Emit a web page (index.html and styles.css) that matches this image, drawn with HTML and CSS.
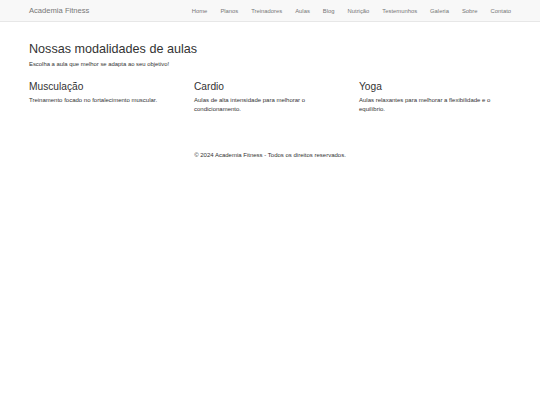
FILE: index.html
```html
<!DOCTYPE html>
<html lang="pt">
<head>
<meta charset="utf-8">
<title>Academia Fitness</title>
<link rel="stylesheet" href="styles.css">
</head>
<body>
<nav class="navbar">
  <div class="container nav-inner">
    <a class="brand" href="#">Academia Fitness</a>
    <ul class="nav-links">
      <li><a href="#">Home</a></li>
      <li><a href="#">Planos</a></li>
      <li><a href="#">Treinadores</a></li>
      <li><a href="#">Aulas</a></li>
      <li><a href="#">Blog</a></li>
      <li><a href="#">Nutrição</a></li>
      <li><a href="#">Testemunhos</a></li>
      <li><a href="#">Galeria</a></li>
      <li><a href="#">Sobre</a></li>
      <li><a href="#">Contato</a></li>
    </ul>
  </div>
</nav>
<main class="container main">
  <h1 class="title">Nossas modalidades de aulas</h1>
  <p class="lead">Escolha a aula que melhor se adapta ao seu objetivo!</p>
  <div class="cols">
    <div class="col">
      <h2 class="col-title">Musculação</h2>
      <p class="col-text">Treinamento focado no fortalecimento muscular.</p>
    </div>
    <div class="col">
      <h2 class="col-title">Cardio</h2>
      <p class="col-text">Aulas de alta intensidade para melhorar o condicionamento.</p>
    </div>
    <div class="col">
      <h2 class="col-title">Yoga</h2>
      <p class="col-text">Aulas relaxantes para melhorar a flexibilidade e o equilíbrio.</p>
    </div>
  </div>
</main>
<footer class="footer">© 2024 Academia Fitness - Todos os direitos reservados.</footer>
</body>
</html>
```
FILE: styles.css
```css
* { box-sizing: border-box; }
body {
  margin: 0;
  font-family: "Liberation Sans", Arial, sans-serif;
  color: #333;
  background: #fff;
}
.container {
  width: 482px;
  margin: 0 auto;
}
.navbar {
  background: #f8f8f8;
  border-bottom: 1px solid #e7e7e7;
  height: 22px;
}
.nav-inner {
  display: flex;
  align-items: center;
  justify-content: space-between;
  height: 21px;
}
.brand {
  color: #777;
  font-size: 7.6px;
  line-height: 10px;
  text-decoration: none;
}
.nav-links {
  list-style: none;
  margin: 0;
  padding: 0;
  display: flex;
  gap: 13px;
  font-size: 5.85px;
  line-height: 8px;
}
.nav-links a {
  color: #777;
  text-decoration: none;
}
.main {
  padding-top: 20px;
}
.title {
  font-size: 12.6px;
  font-weight: normal;
  line-height: 14px;
  margin: 0 0 3.5px;
}
.lead {
  font-size: 5.9px;
  line-height: 9px;
  margin: 0 0 12.5px;
}
.cols {
  display: grid;
  grid-template-columns: repeat(3, 165px);
  margin: 0 -6.5px;
}
.col { padding: 0 6.5px; }
.col-title {
  font-size: 10.2px;
  font-weight: normal;
  line-height: 12px;
  margin: 0 0 2.5px;
}
.col-text {
  font-size: 6px;
  line-height: 9px;
  margin: 0;
}
.footer {
  text-align: center;
  font-size: 6px;
  line-height: 9px;
  margin-top: 37px;
}
```
